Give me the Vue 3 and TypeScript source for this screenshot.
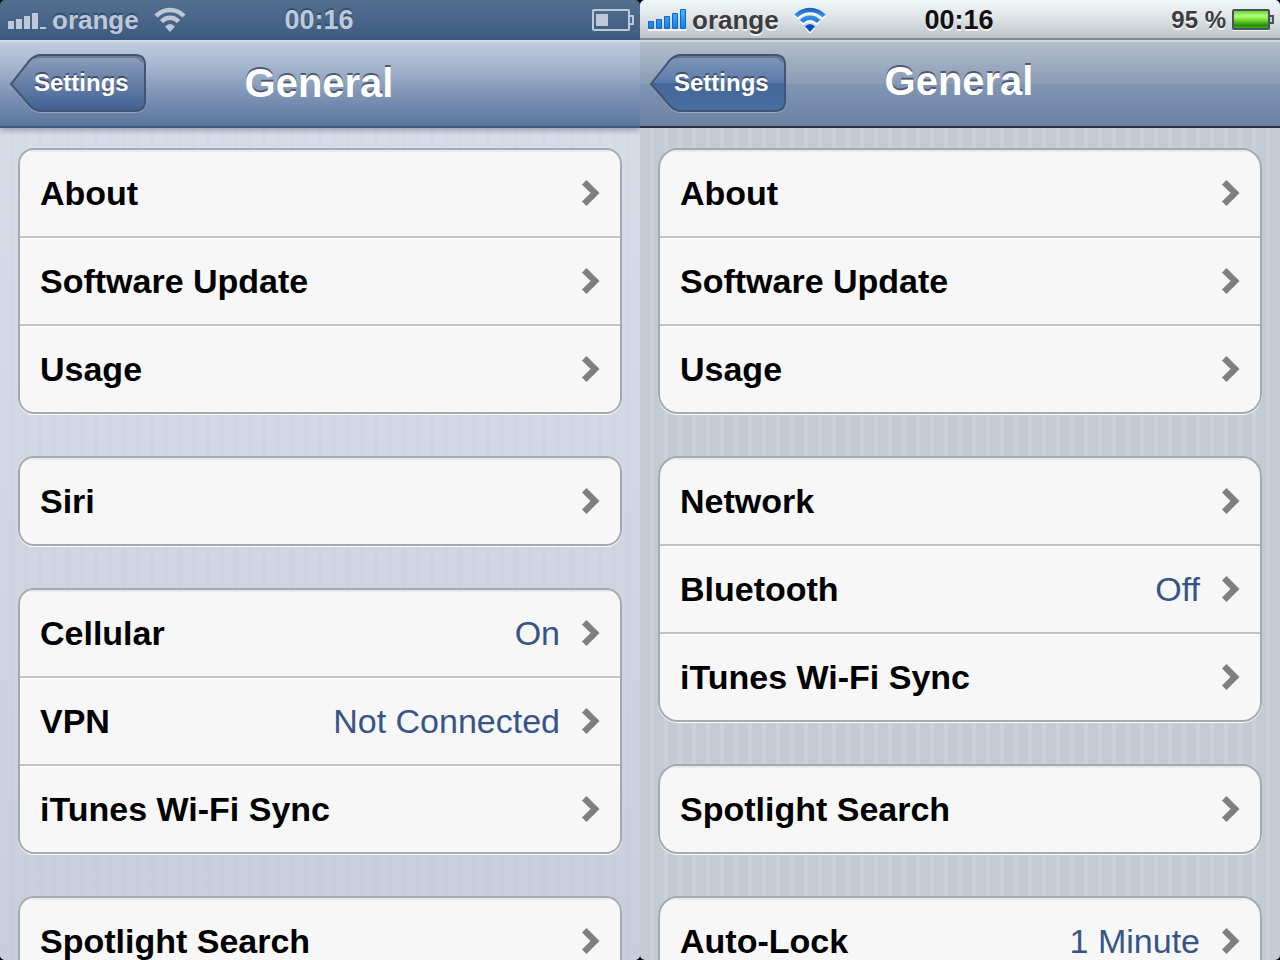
<script setup lang="ts">
interface Row { label: string; value?: string }
interface Phone {
  id: string
  theme: 'blue' | 'silver'
  battery?: string
  groups: Row[][]
}

const phones: Phone[] = [
  {
    id: 'a',
    theme: 'blue',
    groups: [
      [{ label: 'About' }, { label: 'Software Update' }, { label: 'Usage' }],
      [{ label: 'Siri' }],
      [{ label: 'Cellular', value: 'On' }, { label: 'VPN', value: 'Not Connected' }, { label: 'iTunes Wi-Fi Sync' }],
      [{ label: 'Spotlight Search' }],
    ],
  },
  {
    id: 'b',
    theme: 'silver',
    battery: '95 %',
    groups: [
      [{ label: 'About' }, { label: 'Software Update' }, { label: 'Usage' }],
      [{ label: 'Network' }, { label: 'Bluetooth', value: 'Off' }, { label: 'iTunes Wi-Fi Sync' }],
      [{ label: 'Spotlight Search' }],
      [{ label: 'Auto-Lock', value: '1 Minute' }],
    ],
  },
]
</script>

<template>
  <main class="screens">
    <section v-for="p in phones" :key="p.id" class="phone" :class="p.theme">
      <header class="status">
        <div class="side">
          <svg class="signal" width="40" height="24" viewBox="0 0 40 24" aria-hidden="true">
            <defs>
              <linearGradient id="bar" x1="0" y1="0" x2="0" y2="24" gradientUnits="userSpaceOnUse">
                <stop offset="0" stop-color="#3cc0ff" /><stop offset="1" stop-color="#0a74ee" />
              </linearGradient>
            </defs>
            <path v-if="p.theme === 'blue'" fill="#bdc9d9" d="M0 13h6v8H0zM8 11h6v10H8zM16 8h6v13h-6zM24 5h6v16h-6zM32 19h6v2h-6z" />
            <template v-else>
              <path fill="#fff" d="M0 21h38v2H0z" opacity=".8" />
              <path fill="url(#bar)" stroke="#1a62c4" d="M.5 13.5h5v7h-5zM8.5 11.5h5v9h-5zM16.5 8.5h5v12h-5zM24.5 5.5h5v15h-5zM32.5 1.5h5v19h-5z" />
            </template>
          </svg>
          <span>orange</span>
          <svg class="wifi" width="34" height="26" viewBox="0 0 34 26" aria-hidden="true">
            <defs>
              <linearGradient id="wave" x1="0" y1="0" x2="0" y2="26" gradientUnits="userSpaceOnUse">
                <stop offset="0" stop-color="#1656b8" /><stop offset=".35" stop-color="#2f92f0" /><stop offset="1" stop-color="#0a4fc8" />
              </linearGradient>
            </defs>
            <g v-if="p.theme === 'silver'" fill="none" stroke="#fff" stroke-width="5" transform="translate(0 2)">
              <path d="M3 9C11 1 23 1 31 9" /><path d="M8.5 14.5C13.500 9.500 20.500 9.500 25.500 14.500" />
              <path fill="#fff" stroke="none" d="M12 19Q17 14 22 19L17 25z" />
            </g>
            <g fill="none" :stroke="p.theme === 'silver' ? 'url(#wave)' : '#bdc9d9'" stroke-width="4.500">
              <path d="M3 9C11 1 23 1 31 9" /><path d="M8.5 14.5C13.500 9.500 20.500 9.500 25.500 14.500" />
            </g>
            <path :fill="p.theme === 'silver' ? '#0c50c8' : '#bdc9d9'" d="M12 19.500Q17 14.500 22 19.500L17 25z" />
          </svg>
        </div>
        <time>00:16</time>
        <div class="side end">
          <span v-if="p.battery">{{ p.battery }}</span>
          <svg v-if="p.theme === 'blue'" class="battery" width="42" height="22" viewBox="0 0 42 22" aria-hidden="true">
            <path fill="none" stroke="#bdc9d9" stroke-width="2" d="M1 2q0-1 1-1h34q1 0 1 1v18q0 1-1 1H2q-1 0-1-1zM37 7h4v8h-4" />
            <path fill="#bdc9d9" d="M4 5h12v12H4z" />
          </svg>
          <svg v-else class="battery" width="42" height="22" viewBox="0 0 42 22" aria-hidden="true">
            <defs>
              <linearGradient id="charge" x1="0" y1="0" x2="0" y2="1">
                <stop offset="0" stop-color="#68d238" /><stop offset=".3" stop-color="#b4ff78" />
                <stop offset=".55" stop-color="#6fd830" /><stop offset=".85" stop-color="#1f9000" /><stop offset="1" stop-color="#44a81c" />
              </linearGradient>
            </defs>
            <path fill="#fff" opacity=".8" d="M1 20h36v2H1z" />
            <path fill="#c3cad0" stroke="#48515f" stroke-width="2" d="M1 2q0-1 1-1h34q1 0 1 1v17q0 1-1 1H2q-1 0-1-1zM37 7h4v7h-4" />
            <path fill="url(#charge)" d="M2 2h34v17H2z" />
          </svg>
        </div>
      </header>

      <nav class="bar">
        <button type="button" class="back">
          <svg width="138" height="60" viewBox="0 0 138 60" aria-hidden="true">
            <defs>
              <linearGradient :id="'back-' + p.id" x1="0" y1="0" x2="0" y2="1">
                <template v-if="p.theme === 'blue'">
                  <stop offset="0" stop-color="#8e9fba" /><stop offset=".5" stop-color="#667fa7" /><stop offset="1" stop-color="#3f6092" />
                </template>
                <template v-else>
                  <stop offset="0" stop-color="#8398b8" /><stop offset=".5" stop-color="#5b7aab" />
                  <stop offset=".5" stop-color="#456899" /><stop offset="1" stop-color="#4a6da0" />
                </template>
              </linearGradient>
            </defs>
            <path fill="none" stroke="#fff" stroke-opacity=".3" stroke-width="2" d="M2 31L20 7Q25 2 31 2H125Q135 2 135 12V48Q135 58 125 58H31Q25 58 20 53Z" />
            <path :fill="`url(#back-${p.id})`" stroke="#435470" stroke-width="2" d="M1 30L20 6Q25 1 31 1H125Q135 1 135 11V47Q135 57 125 57H31Q25 57 20 52Z" />
            <path fill="none" stroke="#233047" stroke-opacity=".3" stroke-width="2" d="M24 4Q27 3 31 3H125Q130 3 132 8" />
          </svg>
          <span>Settings</span>
        </button>
        <h1>General</h1>
      </nav>

      <div class="content">
        <ul v-for="(g, i) in p.groups" :key="i" class="group">
          <li v-for="r in g" :key="r.label">
            <a href="#" class="row">
              <span class="label">{{ r.label }}</span>
              <span v-if="r.value" class="value">{{ r.value }}</span>
              <svg class="chevron" width="18" height="26" viewBox="0 0 18 26" aria-hidden="true">
                <path fill="#7f7f7f" d="M0 4.500L4.500 0L17.500 13L4.500 26L0 21.500L8.500 13z" />
              </svg>
            </a>
          </li>
        </ul>
      </div>
    </section>
  </main>
</template>

<style>
body { margin: 0; background: #000; }
</style>

<style scoped>
* { box-sizing: border-box; }
.screens {
  display: grid;
  grid-template-columns: 1fr 1fr;
  height: 100vh;
  overflow: hidden;
  font-family: "Liberation Sans", Arial, sans-serif;
}
.phone {
  display: flex;
  flex-direction: column;
  min-width: 0;
  min-height: 0;
  overflow: hidden;
  border-radius: 5px;
}
.status {
  display: grid;
  grid-template-columns: 1fr auto 1fr;
  align-items: center;
  flex: none;
  height: 40px;
  padding: 0 6px;
  font-size: 26px;
  font-weight: bold;
  line-height: 40px;
}
.blue .status {
  color: #bdc9d9;
  background: linear-gradient(#536f8f, #3d5b82);
  text-shadow: 0 -2px 1px #334d70;
}
.silver .status {
  color: #3c3c3e;
  background: linear-gradient(#f2f7fa, #dce2e5 50%, #bcc4c7);
  border-bottom: 2px solid #7e878d;
  text-shadow: 0 2px 0 #f4f7f9;
}
time { font-size: 27px; padding-right: 2px; }
.silver time { color: #111; }
.side { display: flex; align-items: center; }
.signal { margin: 0 4px 0 2px; }
.wifi { margin-left: 14px; }
.end { justify-content: flex-end; gap: 6px; }
.end span { font-size: 24px; }
.bar {
  position: relative;
  display: grid;
  grid-template-columns: 1fr auto 1fr;
  align-items: center;
  flex: none;
  height: 88px;
  padding: 0 12px 0 10px;
}
.blue .bar {
  background: linear-gradient(#bfccdc, #a9bad2 25%, #8196b7 60%, #5a759d);
  border-top: 2px solid #d3deea;
  border-bottom: 2px solid #3f5b83;
  box-shadow: 0 2px 6px rgba(40, 50, 70, .4);
}
.silver .bar {
  background: linear-gradient(#b3becb, #8a9bb5 50%, #8094b4 50%, #6d83a4);
  border-top: 2px solid #cbd5df;
  border-bottom: 2px solid #2d333d;
}
.back {
  display: grid;
  justify-self: start;
  align-items: center;
  padding: 0;
  border: 0;
  background: none;
  color: #fff;
  font: bold 24px/56px "Liberation Sans", Arial, sans-serif;
  text-shadow: 0 -2px 0 #3e506c;
}
.back > * { grid-area: 1 / 1; }
.back span { padding: 0 0 2px 24px; text-align: left; }
h1 {
  margin: 0;
  padding-bottom: 2px;
  color: #fff;
  font-size: 40px;
  line-height: 48px;
  text-shadow: 0 -2px 0 #4d5a70;
}
.silver h1 { padding-bottom: 6px; }
.content {
  display: flex;
  flex-direction: column;
  gap: 42px;
  flex: 1;
  padding: 20px 18px 0;
}
.blue .content {
  background:
    linear-gradient(rgba(216, 221, 232, .7), rgba(207, 212, 224, .7) 50%, rgba(197, 202, 215, .8)),
    repeating-linear-gradient(90deg, #d5d9e5 0 10px, #cbd0df 10px 14px);
}
.silver .content {
  background: repeating-linear-gradient(90deg, #c4cbd3 0 10px, #cbd3da 10px 14px);
}
.group {
  flex: none;
  margin: 0;
  padding: 0;
  list-style: none;
  overflow: hidden;
  border: 2px solid #a4aab2;
  border-radius: 16px;
  background: #f7f7f7;
  box-shadow: 0 1px 0 #fff;
}
.silver .group { border-radius: 20px; }
.row {
  display: flex;
  align-items: center;
  height: 86px;
  padding: 0 20px;
  color: #000;
  text-decoration: none;
  font-size: 34px;
  line-height: 40px;
}
li + li { border-top: 2px solid #c4c4c6; }
li:first-child .row { box-shadow: inset 0 2px 1px #e9eaec; }
li + li .row { box-shadow: inset 0 2px 0 #fff; }
.label { flex: 1; font-weight: bold; }
.value { color: #385487; }
.value + .chevron { margin-left: 22px; }
</style>
